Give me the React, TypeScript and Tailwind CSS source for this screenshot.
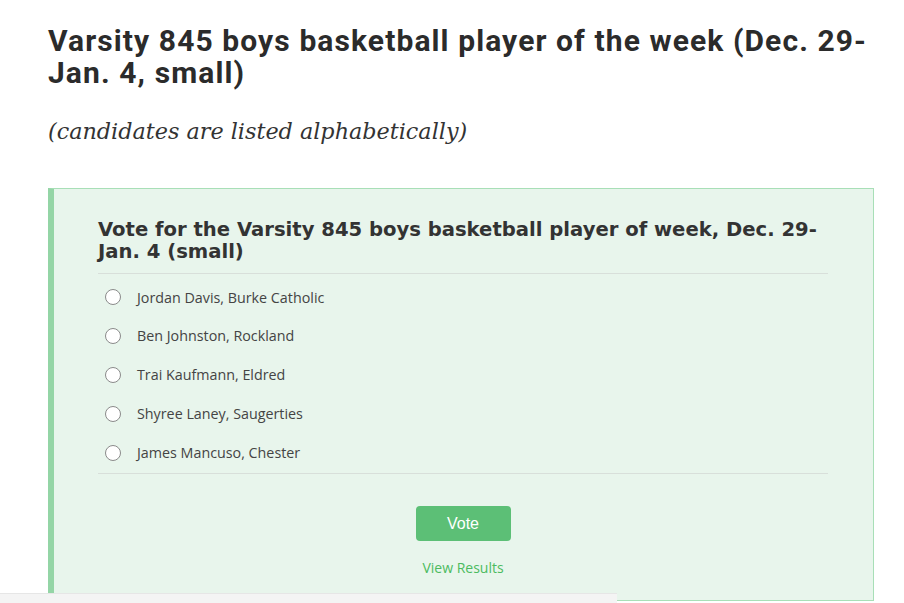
import React from "react";

const candidates = [
  "Jordan Davis, Burke Catholic",
  "Ben Johnston, Rockland",
  "Trai Kaufmann, Eldred",
  "Shyree Laney, Saugerties",
  "James Mancuso, Chester",
];

export default function App() {
  return (
    <div className="relative w-[904px] h-[603px] overflow-hidden bg-white">
      <div className="pl-[48px] pr-[20px] pt-[25px]">
        <h1
          className="text-[30px] leading-[32px] font-bold text-[#2b2b2b] whitespace-nowrap tracking-[1.1px]"
          style={{ fontFamily: "Roboto, 'Noto Sans', sans-serif" }}
        >
          Varsity 845 boys basketball player of the week (Dec. 29-
          <br />
          Jan. 4, small)
        </h1>
        <p
          className="mt-[27px] text-[22.3px] leading-[30px] italic text-[#333]"
          style={{ fontFamily: "'DejaVu Serif', 'Liberation Serif', serif" }}
        >
          (candidates are listed alphabetically)
        </p>
        <div className="mt-[42px] w-[826px] h-[413px] bg-[#e8f5ec] border border-[#a8dfb7] border-l-[6px] border-l-[#94d5a6] pl-[44px] pr-[45px] pt-[30px]">
          <h2
            className="text-[19.6px] leading-[22px] font-bold text-[#333] whitespace-nowrap"
            style={{ fontFamily: "'DejaVu Sans', Verdana, sans-serif" }}
          >
            Vote for the Varsity 845 boys basketball player of week, Dec. 29-
            <br />
            Jan. 4 (small)
          </h2>
          <div className="mt-[10px] border-t border-[#d8dfda]" />
          <div className="pt-[4px] pb-[1.5px]">
            {candidates.map((c) => (
              <label
                key={c}
                className="flex items-center h-[38.8px] pl-[7px]"
                style={{ fontFamily: "'Open Sans', 'Noto Sans', sans-serif" }}
              >
                <span className="w-[16px] h-[16px] rounded-full border-[1.5px] border-[#8a8a8a] bg-white shrink-0" />
                <span className="ml-[16px] text-[14.3px] text-[#444]">{c}</span>
              </label>
            ))}
          </div>
          <div className="border-t border-[#d8dfda]" />
          <div className="flex flex-col items-center pt-[32px]">
            <button
              className="w-[95px] h-[35px] rounded-[4px] bg-[#5cbf76] text-white text-[16px]"
              style={{ fontFamily: "'Liberation Sans', Arial, sans-serif" }}
            >
              Vote
            </button>
            <span
              className="mt-[17px] text-[14px] leading-[20px] text-[#4cbb5f]"
              style={{ fontFamily: "'Open Sans', 'Noto Sans', sans-serif" }}
            >
              View Results
            </span>
          </div>
        </div>
      </div>
      <div className="absolute left-0 top-[593px] w-[617px] h-[10px] bg-[#f4f4f4] border-t border-[#e6e6e6]" />
    </div>
  );
}
